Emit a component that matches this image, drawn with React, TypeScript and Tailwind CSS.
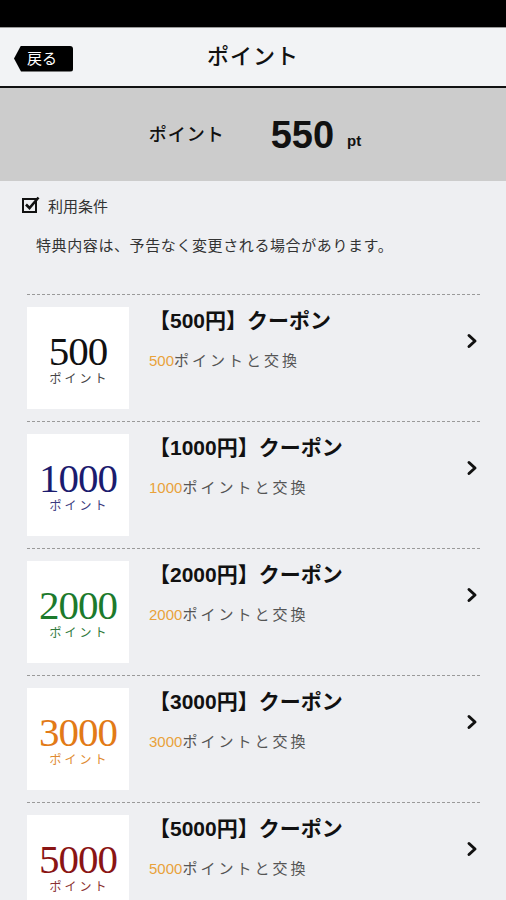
import React from "react";

const items = [
  { n: "500", color: "text-[#111111]", sub: "text-[#444444]" },
  { n: "1000", color: "text-[#1b1b6e]", sub: "text-[#3a3a7e]" },
  { n: "2000", color: "text-[#1c7a2c]", sub: "text-[#2f7a3c]" },
  { n: "3000", color: "text-[#e27a17]", sub: "text-[#e08a30]" },
  { n: "5000", color: "text-[#8a1414]", sub: "text-[#8a3030]" },
];

function Chevron() {
  return (
    <svg width="12" height="16" viewBox="0 0 12 16" className="shrink-0">
      <path d="M3 2.5 L9 8 L3 13.5" fill="none" stroke="#111" strokeWidth="3" strokeLinecap="round" strokeLinejoin="round" />
    </svg>
  );
}

function CheckIcon() {
  return (
    <svg width="18" height="18" viewBox="0 0 18 18" className="shrink-0">
      <rect x="1" y="3" width="13" height="13" fill="none" stroke="#111" strokeWidth="2" />
      <path d="M4 8.5 L7.5 12 L16.5 1.5" fill="none" stroke="#111" strokeWidth="2.6" strokeLinejoin="miter" />
    </svg>
  );
}

export default function App() {
  return (
    <div className="w-[506px] min-h-[900px] bg-[#eeeff2] font-['Liberation_Sans','Noto_Sans_CJK_JP',sans-serif] text-[#111]">
      <div className="h-[27px] bg-black" />
      <div className="h-[61px] bg-[#f2f3f5] border-t border-[#9a9a9a] border-b-2 border-b-[#111] grid grid-cols-[1fr_auto_1fr] items-center">
        <div className="pl-[14px] pt-[3px]">
          <div className="w-[59px] h-[26px] bg-black rounded-r-[3px] [clip-path:polygon(7px_0,100%_0,100%_100%,7px_100%,0_50%)] flex items-center pl-[13px] text-white text-[15px] leading-none">
            戻る
          </div>
        </div>
        <div className="text-[22px] font-medium tracking-[1px] pb-[2px]">ポイント</div>
        <div />
      </div>
      <div className="h-[93px] bg-[#cccccc] flex items-center justify-center pl-[4px]">
        <span className="text-[18px] font-medium tracking-[1px] mt-[2px]">ポイント</span>
        <span className="ml-[46px] text-[38px] font-bold leading-none">550</span>
        <span className="ml-[13px] text-[15px] font-bold mt-[14px]">pt</span>
      </div>
      <div className="pl-[22px] pt-[11px] flex items-center">
        <CheckIcon />
        <span className="ml-[8px] text-[15px] text-[#333] mt-[4px]">利用条件</span>
      </div>
      <div className="pl-[36px] pt-[16px] text-[15px] tracking-[0.6px] text-[#333]">
        特典内容は、予告なく変更される場合があります。
      </div>
      <div className="mt-[37px] ml-[27px] mr-[26px]">
        {items.map((it) => (
          <div key={it.n} className="border-t border-dashed border-[#9a9a9a] py-[12px] flex items-start">
            <div className="w-[102px] h-[102px] bg-white flex flex-col items-center justify-center shrink-0">
              <div className={`font-['Liberation_Serif',serif] text-[41px] leading-[42px] tracking-[-1px] ${it.color}`}>
                {it.n}
              </div>
              <div className={`text-[12px] leading-[14px] tracking-[3px] pl-[3px] font-['Liberation_Serif','Noto_Sans_CJK_JP',serif] ${it.sub}`}>
                ポイント
              </div>
            </div>
            <div className="flex-1 ml-[20px] flex items-center">
              <div className="flex-1">
                <div className="text-[21px] leading-[28px] font-bold">【{it.n}円】クーポン</div>
                <div className="mt-[15px] text-[15px] leading-[22px] text-[#555]">
                  <span className="text-[#e9a23b]">{it.n}</span>
                  <span className="tracking-[3px]">ポイントと交換</span>
                </div>
              </div>
              <div className="mr-[2px] mt-[2px]">
                <Chevron />
              </div>
            </div>
          </div>
        ))}
      </div>
    </div>
  );
}
